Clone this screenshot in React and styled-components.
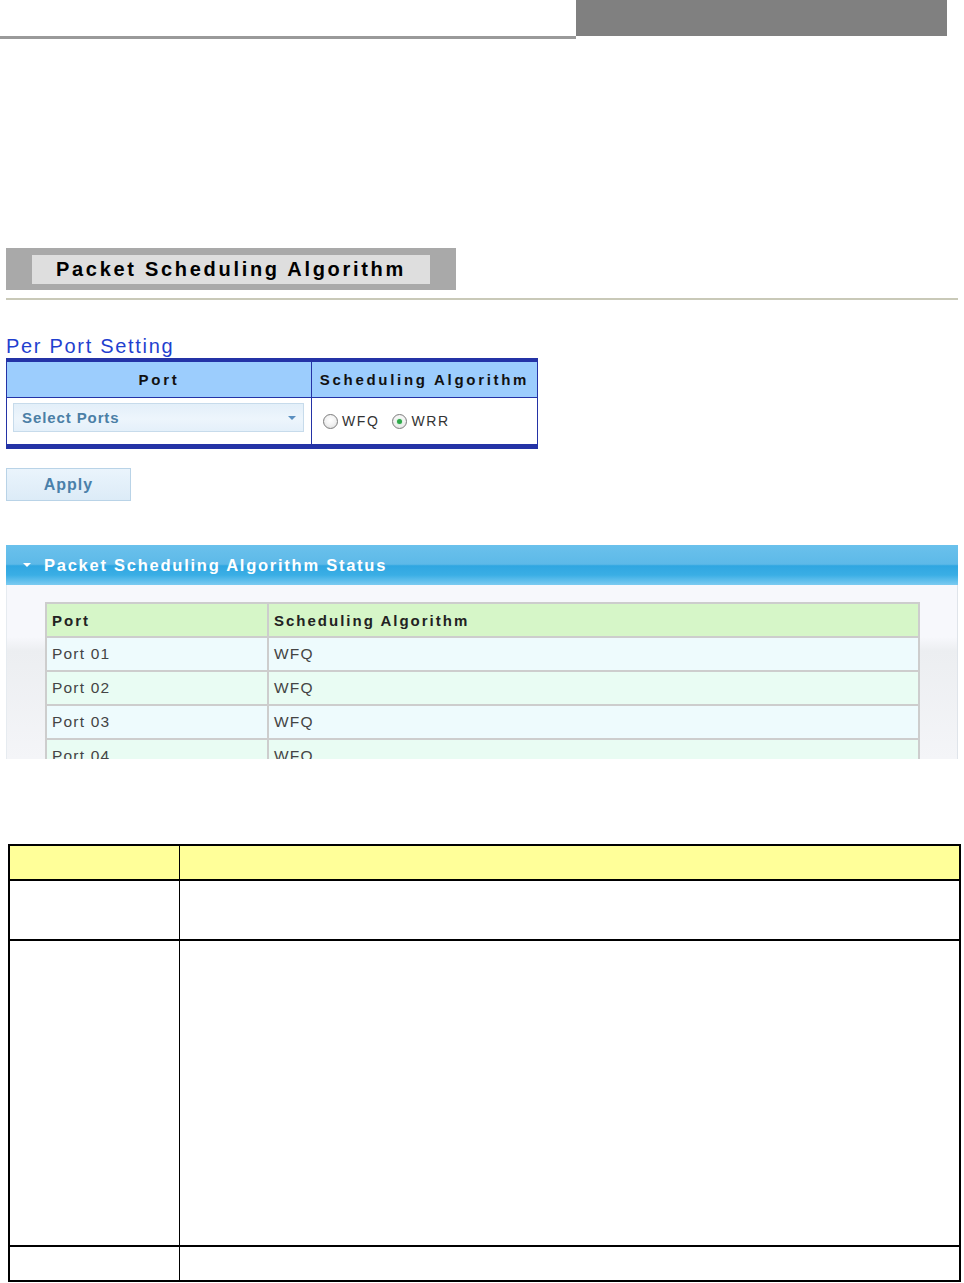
import React from 'react'
import styled, { createGlobalStyle } from 'styled-components'

const GlobalStyle = createGlobalStyle`
  html, body {
    margin: 0;
    padding: 0;
    background: #ffffff;
  }
  body {
    width: 964px;
    font-family: "Liberation Sans", Arial, sans-serif;
  }
`

const TopStrip = styled.div`
  display: flex;
  align-items: flex-start;
  height: 39px;
`

const TopRule = styled.div`
  width: 576px;
  height: 36px;
  border-bottom: 3px solid #9a9a9a;
`

const TopTab = styled.div`
  width: 371px;
  height: 36px;
  background: #808080;
`

const Content = styled.div`
  width: 952px;
  padding: 0 6px;
`

const TitleBanner = styled.div`
  margin-top: 209px;
  width: 398px;
  padding: 7px 26px 6px;
  background: #a9a9a9;
`

const TitleInner = styled.div`
  height: 29px;
  background: #dedede;
  display: flex;
  align-items: center;
  justify-content: center;
  font-size: 20px;
  font-weight: 700;
  letter-spacing: 2.7px;
  color: #000;
`

const Rule = styled.div`
  margin-top: 8px;
  border-top: 2px solid #c9c9b8;
`

const SectionTitle = styled.div`
  margin-top: 34px;
  height: 24px;
  line-height: 24px;
  font-size: 20px;
  letter-spacing: 1.7px;
  color: #1f3fcf;
`

const SettingGrid = styled.div`
  display: grid;
  grid-template-columns: 304px 1fr;
  width: 532px;
  box-sizing: border-box;
  border: 1px solid #2433a6;
  border-top-width: 4px;
  border-bottom-width: 5px;
`

const SettingHead = styled.div`
  height: 35px;
  border-bottom: 1px solid #2433a6;
  border-left: ${p => (p.$divider ? '1px solid #2433a6' : 'none')};
  background: #9ccdfd;
  display: flex;
  align-items: center;
  justify-content: center;
  font-size: 15px;
  font-weight: 700;
  letter-spacing: 2.7px;
  color: #111;
`

const SettingCell = styled.div`
  height: 46px;
  box-sizing: border-box;
  border-left: ${p => (p.$divider ? '1px solid #2433a6' : 'none')};
  background: #fff;
  display: flex;
  align-items: ${p => (p.$top ? 'flex-start' : 'center')};
  padding: ${p => (p.$top ? '5px 0 0 6px' : '0 0 0 11px')};
  gap: 13px;
`

const SelectBox = styled.div`
  width: 291px;
  height: 29px;
  box-sizing: border-box;
  border: 1px solid #c7dbeb;
  background: linear-gradient(to bottom, #e3eff9 0%, #edf5fc 55%, #e4f0fa 100%);
  display: flex;
  align-items: center;
  justify-content: space-between;
  padding: 0 7px 0 8px;
  font-size: 15px;
  font-weight: 700;
  letter-spacing: 0.9px;
  color: #4b7fa6;
`

const Caret = styled.span`
  width: 0;
  height: 0;
  border-left: 4px solid transparent;
  border-right: 4px solid transparent;
  border-top: 4px solid #5a8fc0;
`

const RadioLabel = styled.label`
  display: flex;
  align-items: center;
  gap: 4px;
  font-size: 14px;
  letter-spacing: 1.6px;
  color: #333;
`

const RadioDot = styled.span`
  width: 15px;
  height: 15px;
  box-sizing: border-box;
  border-radius: 50%;
  border: 1px solid #7d7d7d;
  background: radial-gradient(circle at 50% 40%, #ffffff 0%, #f2f2f2 50%, #d6d6d6 100%);
  display: flex;
  align-items: center;
  justify-content: center;

  &::after {
    content: '';
    width: 5px;
    height: 5px;
    border-radius: 50%;
    background: ${p => (p.$checked ? '#2ea84a' : 'transparent')};
    box-shadow: ${p => (p.$checked ? '0 0 2px #8fd99e' : 'none')};
  }
`

const ApplyButton = styled.button`
  margin-top: 19px;
  width: 125px;
  height: 33px;
  border: 1px solid #b9d3e7;
  background: linear-gradient(to bottom, #eaf4fc 0%, #dcebf7 100%);
  font-family: "Liberation Sans", Arial, sans-serif;
  font-size: 16px;
  font-weight: 700;
  letter-spacing: 1px;
  color: #4a80aa;
  padding: 0;
  display: block;
`

const StatusPanel = styled.div`
  margin-top: 44px;
  width: 952px;
`

const StatusHeader = styled.div`
  height: 40px;
  background: linear-gradient(to bottom, #6ac1ec 0%, #5db9e8 48%, #2fa6e1 52%, #3aaee5 75%, #7ccbf1 100%);
  display: flex;
  align-items: center;
  padding-left: 17px;
  gap: 13px;
  font-size: 16.5px;
  font-weight: 700;
  letter-spacing: 1.75px;
  color: #ffffff;
`

const DownArrow = styled.span`
  width: 0;
  height: 0;
  border-left: 4px solid transparent;
  border-right: 4px solid transparent;
  border-top: 4px solid #ffffff;
`

const StatusBody = styled.div`
  height: 174px;
  box-sizing: border-box;
  overflow: hidden;
  padding: 17px 0 0 38px;
  border-left: 1px solid #e6ebf0;
  border-right: 1px solid #dfe4ea;
  background: linear-gradient(to bottom, #f7f8fc 0px, #f7f8fc 52px, #eceef1 66px, #f4f5f8 174px);
`

const StatusGrid = styled.div`
  display: grid;
  grid-template-columns: 222px 651px;
  width: 875px;
  box-sizing: border-box;
  border-top: 2px solid #cdcdcd;
  border-left: 2px solid #cdcdcd;
`

const StatusCell = styled.div`
  height: 34px;
  box-sizing: border-box;
  border-right: 2px solid #cdcdcd;
  border-bottom: 2px solid #cdcdcd;
  background: ${p => p.$bg};
  display: flex;
  align-items: center;
  padding-left: 5px;
  font-size: ${p => (p.$head ? '15px' : '15.5px')};
  font-weight: ${p => (p.$head ? 700 : 400)};
  letter-spacing: ${p => (p.$head ? '2px' : '1.2px')};
  color: ${p => (p.$head ? '#222' : '#444')};
`

const DescTable = styled.div`
  margin: 85px 0 0 8px;
  width: 953px;
  box-sizing: border-box;
  display: grid;
  grid-template-columns: 169px 1fr;
  border: 2px solid #000;
`

const DescCell = styled.div`
  height: ${p => p.$h}px;
  border-top: ${p => (p.$first ? 'none' : '2px solid #000')};
  border-left: ${p => (p.$divider ? '1px solid #000' : 'none')};
  background: ${p => (p.$head ? '#ffff99' : '#ffffff')};
`

const ports = ['Port 01', 'Port 02', 'Port 03', 'Port 04']
const descRows = [33, 58, 304, 33]

const App = () => {
  return (
    <>
      <GlobalStyle />
      <TopStrip>
        <TopRule />
        <TopTab />
      </TopStrip>
      <Content>
        <TitleBanner>
          <TitleInner>Packet Scheduling Algorithm</TitleInner>
        </TitleBanner>
        <Rule />
        <SectionTitle>Per Port Setting</SectionTitle>
        <SettingGrid>
          <SettingHead>Port</SettingHead>
          <SettingHead $divider>Scheduling Algorithm</SettingHead>
          <SettingCell $top>
            <SelectBox>
              Select Ports
              <Caret />
            </SelectBox>
          </SettingCell>
          <SettingCell $divider>
            <RadioLabel>
              <RadioDot />
              WFQ
            </RadioLabel>
            <RadioLabel>
              <RadioDot $checked />
              WRR
            </RadioLabel>
          </SettingCell>
        </SettingGrid>
        <ApplyButton>Apply</ApplyButton>
        <StatusPanel>
          <StatusHeader>
            <DownArrow />
            Packet Scheduling Algorithm Status
          </StatusHeader>
          <StatusBody>
            <StatusGrid>
              <StatusCell $head $bg="#d6f6c8">Port</StatusCell>
              <StatusCell $head $bg="#d6f6c8">Scheduling Algorithm</StatusCell>
              {ports.map((port, i) => (
                <React.Fragment key={port}>
                  <StatusCell $bg={i % 2 ? '#e9fcf3' : '#eefbfd'}>{port}</StatusCell>
                  <StatusCell $bg={i % 2 ? '#e9fcf3' : '#eefbfd'}>WFQ</StatusCell>
                </React.Fragment>
              ))}
            </StatusGrid>
          </StatusBody>
        </StatusPanel>
      </Content>
      <DescTable>
        {descRows.map((h, i) => (
          <React.Fragment key={i}>
            <DescCell $h={h} $first={i === 0} $head={i === 0} />
            <DescCell $h={h} $first={i === 0} $head={i === 0} $divider />
          </React.Fragment>
        ))}
      </DescTable>
    </>
  )
}

export default App
